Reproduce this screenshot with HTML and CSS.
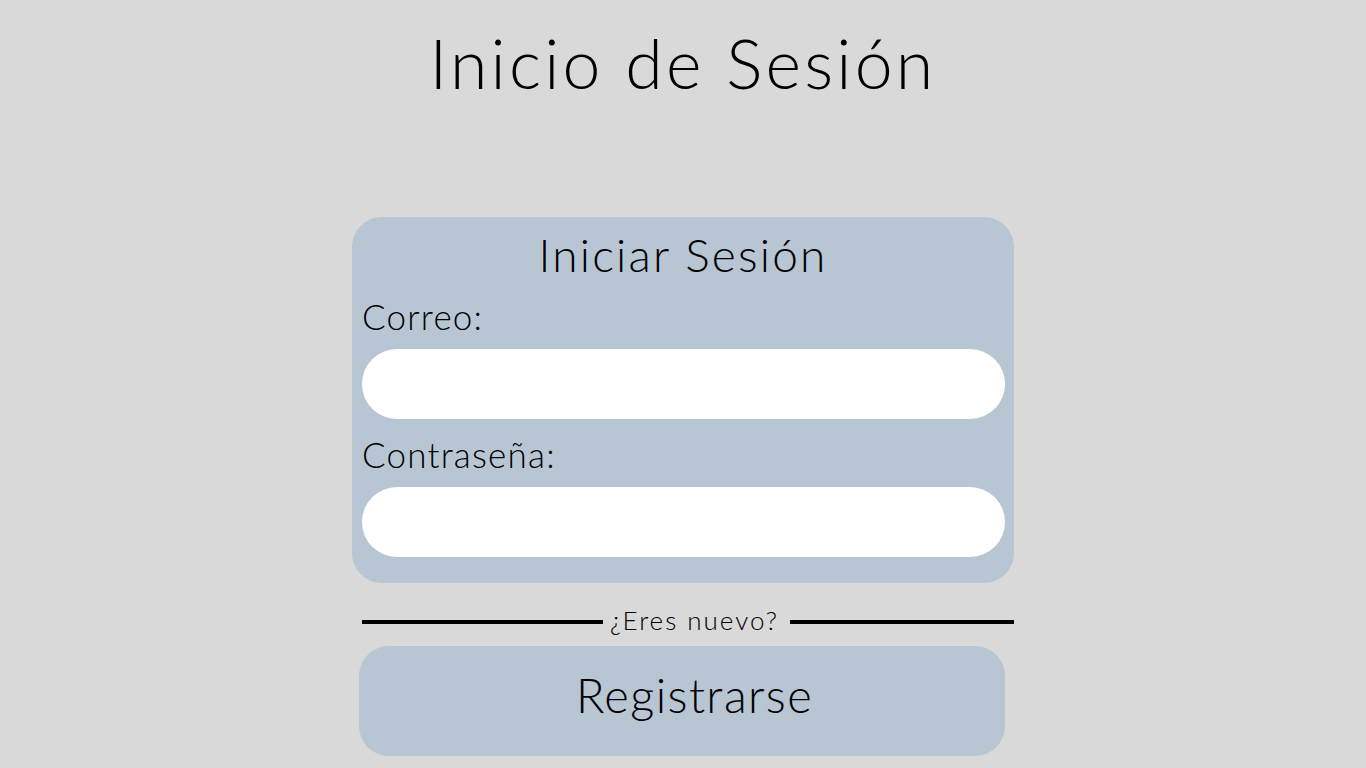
FILE: index.html
```html
<!DOCTYPE html>
<html lang="es">
<head>
<meta charset="utf-8">
<title>Inicio de Sesión</title>
<link rel="stylesheet" href="styles.css">
</head>
<body>
  <h1 class="page-title">Inicio de Sesión</h1>
  <main class="wrap">
    <form class="card">
      <h2 class="card-title">Iniciar Sesión</h2>
      <label class="label label-first" for="correo">Correo:</label>
      <input class="field" id="correo" type="email">
      <label class="label" for="pass">Contraseña:</label>
      <input class="field" id="pass" type="password">
    </form>
    <div class="divider">
      <span class="rule rule-left"></span>
      <span class="divider-text">¿Eres nuevo?</span>
      <span class="rule rule-right"></span>
    </div>
    <button class="register" type="button">Registrarse</button>
  </main>
</body>
</html>
```
FILE: styles.css
```css
* { box-sizing: border-box; }
html, body { margin: 0; padding: 0; }
body {
  background: #d9d9d9;
  font-family: "Lato", "Open Sans", sans-serif;
  font-weight: 300;
  color: #000;
}
.page-title {
  margin: 29px 0 0;
  text-align: center;
  font-size: 68px;
  line-height: 68px;
  font-weight: 300;
  letter-spacing: 3.2px;
}
.wrap {
  width: 662px;
  margin: 0 auto;
}
.card {
  margin-top: 120px;
  background: #b8c6d4;
  border-radius: 30px;
  padding: 15px 10px 26px;
  display: flex;
  flex-direction: column;
}
.card-title {
  margin: 0;
  text-align: center;
  font-size: 46px;
  line-height: 46px;
  font-weight: 300;
  letter-spacing: 2.2px;
}
.label {
  display: block;
  font-size: 35px;
  line-height: 35px;
  margin: 18px 0 15px;
  letter-spacing: 1.2px;
}
.label-first { margin-top: 21px; }
.field {
  display: block;
  width: 643px;
  height: 70px;
  border: none;
  border-radius: 35px;
  background: #fff;
  outline: none;
}
.divider {
  margin-top: 25px;
  margin-left: 10px;
  display: flex;
  align-items: center;
  gap: 7px;
  height: 25px;
}
.rule {
  height: 4px;
  background: #000;
  margin-top: 2px;
}
.rule-left { flex: 0 0 241px; }
.rule-right { flex: 1; margin-left: 4px; }
.divider-text {
  font-size: 26px;
  line-height: 25px;
  letter-spacing: 2px;
}
.register {
  display: block;
  margin: 13px 0 0 7px;
  width: 646px;
  height: 110px;
  border: none;
  border-radius: 30px;
  background: #b8c6d4;
  font-family: inherit;
  font-weight: 300;
  font-size: 47px;
  line-height: 47px;
  color: #000;
  padding: 0 0 12px 25px;
  letter-spacing: 1.4px;
}
```
